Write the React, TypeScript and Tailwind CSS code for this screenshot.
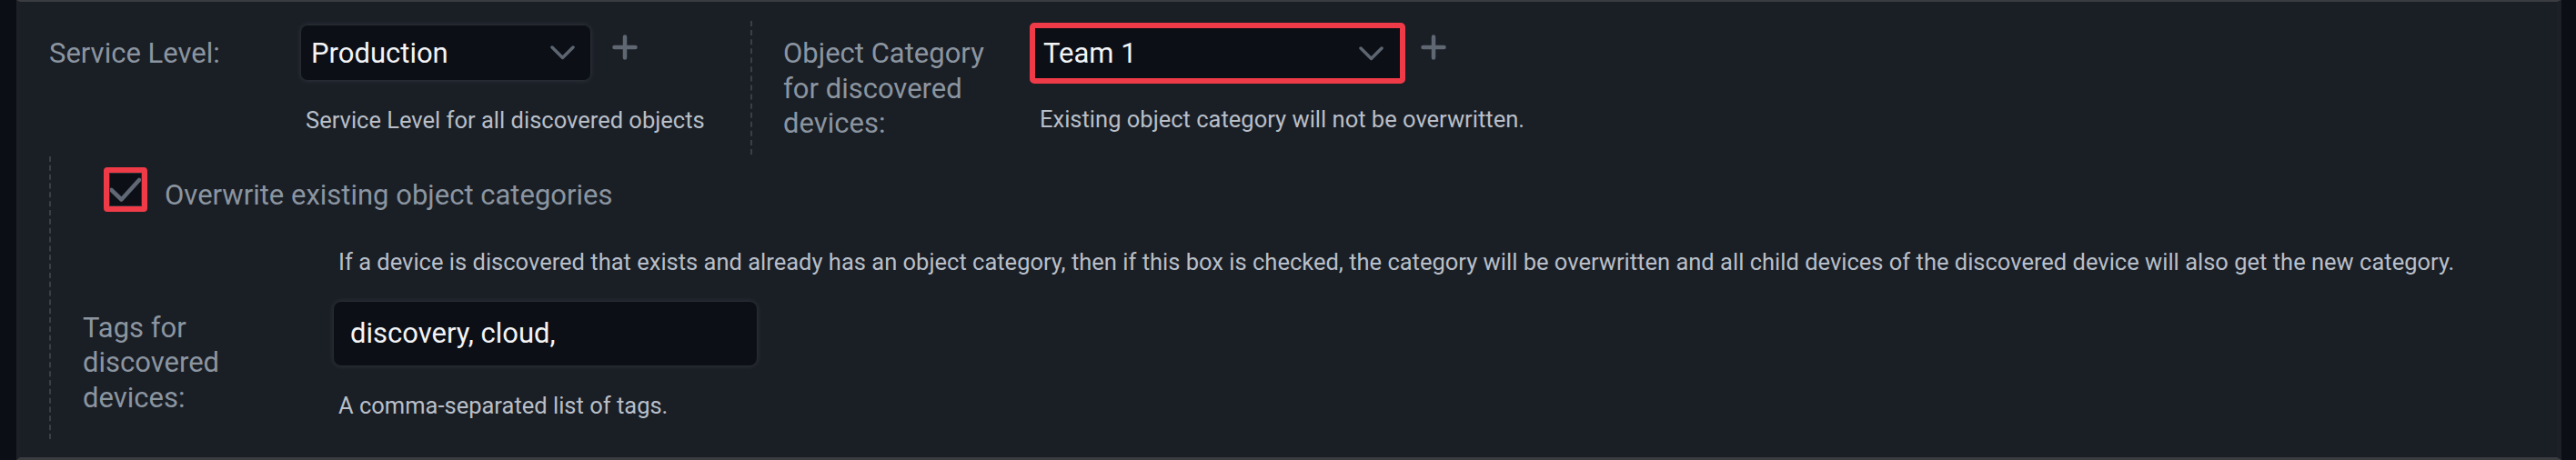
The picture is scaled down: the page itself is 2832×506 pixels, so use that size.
import type { ReactNode } from "react"

const labelText =
  "font-[Roboto,'Liberation_Sans',sans-serif] text-[31px] leading-[38.5px] text-[#8b95a0]"
const helpText =
  "font-[Roboto,'Liberation_Sans',sans-serif] text-[25.5px] leading-[32px] text-[#b8bfc8] whitespace-nowrap"
const valueText =
  "font-[Roboto,'Liberation_Sans',sans-serif] text-[31px] leading-none text-[#f3f4f6] whitespace-nowrap"

function Chevron() {
  return (
    <svg
      aria-hidden="true"
      className="h-[16px] w-[27px] shrink-0"
      fill="none"
      viewBox="0 0 27 16"
    >
      <polyline
        points="2,2 13.5,13.5 25,2"
        stroke="#5d6571"
        strokeLinecap="round"
        strokeLinejoin="round"
        strokeWidth="3.5"
      />
    </svg>
  )
}

function Plus({ className }: { className: string }) {
  return (
    <button aria-label="Add" className={`shrink-0 ${className}`} type="button">
      <svg className="h-[28px] w-[28px]" fill="none" viewBox="0 0 28 28">
        <path
          d="M14 2.5v23M2.5 14h23"
          stroke="#5f6773"
          strokeLinecap="round"
          strokeWidth="4.5"
        />
      </svg>
    </button>
  )
}

function Help({ children, className }: { children: ReactNode; className: string }) {
  return <p className={`${helpText} ${className}`}>{children}</p>
}

export default function App() {
  return (
    <div className="flex h-[506px] w-[2832px] bg-[#0b0e14]">
      <div className="w-[18px] shrink-0" />
      <section className="h-[506px] w-[2798px] shrink-0 border-b-[3px] border-l-4 border-r-[5px] border-t-2 border-b-[#3a3c40] border-l-[#1d2026] border-r-[#1d2026] border-t-[#3a3c40] bg-[#1a1e25]">
        {/* service level + object category */}
        <div className="flex items-start">
          <div className="w-[803px] shrink-0 pl-[32px] pt-[26px]">
            <div className="flex items-start">
              <span className={`${labelText} mt-[12px] w-[277px] shrink-0`}>
                Service Level:
              </span>
              <div className="flex h-[60px] w-[318px] shrink-0 items-center justify-between rounded-[7px] bg-[#0c0f16] pl-[11px] pr-[17px] shadow-[0_0_6px_rgba(200,210,225,0.16)]">
                <span className={valueText}>Production</span>
                <Chevron />
              </div>
              <Plus className="ml-[24px] mt-[10px]" />
            </div>
            <Help className="ml-[282px] mt-[28px]">
              Service Level for all discovered objects
            </Help>
          </div>

          <div className="mt-[21px] flex h-[147px] items-start border-l-2 border-dashed border-[#3a3f47] pl-[34px]">
            <span className={`${labelText} mt-[17px] w-[271px] shrink-0 pr-[26px]`}>
              Object Category for discovered devices:
            </span>
            <div className="mt-[2px]">
              <div className="flex items-start">
                <div className="flex h-[67px] w-[413px] shrink-0 items-center justify-between rounded-[5px] border-[6px] border-[#ef3b48] bg-[#0c0f16] pl-[9px] pr-[18px]">
                  <span className={valueText}>Team 1</span>
                  <Chevron />
                </div>
                <Plus className="ml-[17px] mt-[13px]" />
              </div>
              <Help className="ml-[11px] mt-[23px]">
                Existing object category will not be overwritten.
              </Help>
            </div>
          </div>
        </div>

        {/* overwrite + tags */}
        <div className="ml-[32px] mt-[2px] h-[311px] border-l-2 border-dashed border-[#3a3f47] pl-[58px] pt-[12px]">
          <label className="flex items-start">
            <span className="flex h-[49px] w-[48px] shrink-0 rounded-[4px] border-[6px] border-[#ef3b48]">
              <span className="flex h-full w-full items-center justify-center border border-[#2b2f36] bg-[#0c0f16]">
                <svg className="h-[35px] w-[34px]" fill="none" viewBox="0 0 34 35">
                  <polyline
                    points="1.5,18 12.5,28.5 32,7"
                    stroke="#5f6874"
                    strokeLinecap="round"
                    strokeLinejoin="round"
                    strokeWidth="4.5"
                  />
                </svg>
              </span>
            </span>
            <span className={`${labelText} ml-[19px] mt-[12px] whitespace-nowrap`}>
              Overwrite existing object categories
            </span>
          </label>

          <Help className="ml-[258px] mt-[37px]">
            If a device is discovered that exists and already has an object category,
            then if this box is checked, the category will be overwritten and all child
            devices of the discovered device will also get the new category.
          </Help>

          <div className="-ml-[23px] mt-[28px] flex items-start">
            <span className={`${labelText} mt-[10px] w-[276px] shrink-0 pr-[100px]`}>
              Tags for discovered devices:
            </span>
            <div>
              <div className="flex h-[70px] w-[465px] items-center rounded-[8px] bg-[#0c0f16] pl-[18px] shadow-[0_0_6px_rgba(200,210,225,0.16)]">
                <span className={valueText}>discovery, cloud,</span>
              </div>
              <Help className="ml-[5px] mt-[28px]">A comma-separated list of tags.</Help>
            </div>
          </div>
        </div>
      </section>
      <div className="flex-1" />
    </div>
  )
}
